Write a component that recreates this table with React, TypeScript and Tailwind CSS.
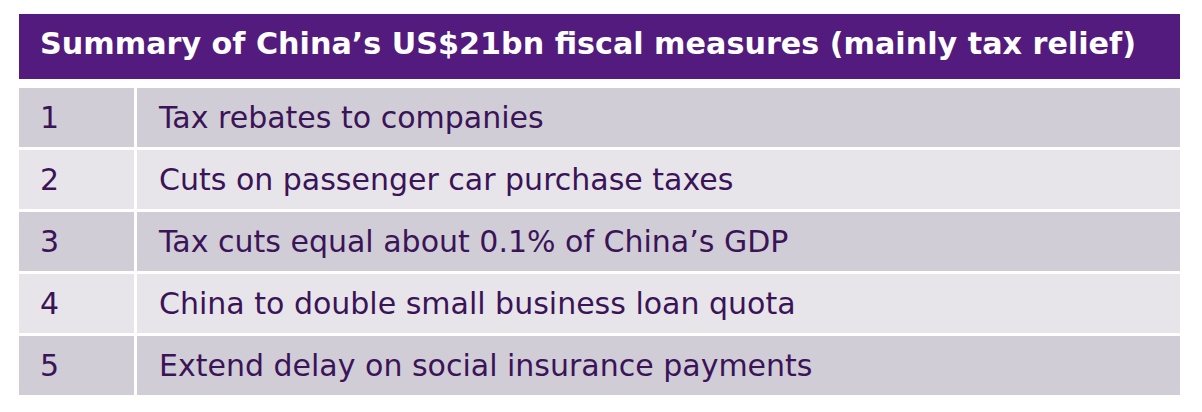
import React from "react";

const rows = [
  "Tax rebates to companies",
  "Cuts on passenger car purchase taxes",
  "Tax cuts equal about 0.1% of China\u2019s GDP",
  "China to double small business loan quota",
  "Extend delay on social insurance payments",
];

export default function App() {
  return (
    <div className="w-[1202px] h-[412px] bg-white pt-[14px] pl-[19px]" style={{ fontFamily: '"DejaVu Sans", sans-serif' }}>
      <div className="w-[1161px] flex flex-col">
        <div className="h-[65px] bg-[#521b7d] flex items-center pl-[21px] pb-[4px]">
          <span className="text-white font-bold text-[30.2px] leading-none">
            Summary of China{"\u2019"}s US$21bn fiscal measures (mainly tax relief)
          </span>
        </div>
        <div className="mt-[9px] flex flex-col gap-[3px]">
          {rows.map((t, i) => (
            <div key={i} className="flex gap-[3px] h-[59px]">
              <div className={`w-[115px] flex items-center pl-[21px] ${i % 2 === 0 ? "bg-[#d0cdd7]" : "bg-[#e7e5ea]"}`}>
                <span className="text-[#3b1458] text-[30px] leading-none">{i + 1}</span>
              </div>
              <div className={`flex-1 flex items-center pl-[22px] ${i % 2 === 0 ? "bg-[#d0cdd7]" : "bg-[#e7e5ea]"}`}>
                <span className="text-[#3b1458] text-[30px] leading-none">{t}</span>
              </div>
            </div>
          ))}
        </div>
      </div>
    </div>
  );
}
